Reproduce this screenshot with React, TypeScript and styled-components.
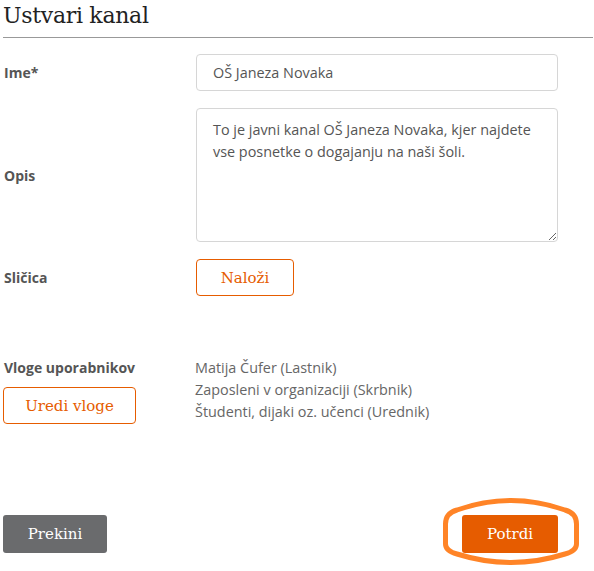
import React from "react";
import styled, { createGlobalStyle } from "styled-components";

const GlobalStyle = createGlobalStyle`
  html, body {
    margin: 0;
    background: #fff;
    font-family: "Source Sans Pro", "Open Sans", "Liberation Sans", sans-serif;
  }
`;

const roles = [
  "Matija Čufer (Lastnik)",
  "Zaposleni v organizaciji (Skrbnik)",
  "Študenti, dijaki oz. učenci (Urednik)",
];

const App = () => {
  return (
    <Page>
      <GlobalStyle />
      <Title>Ustvari kanal</Title>
      <Divider />
      <FormRow>
        <Label>Ime*</Label>
        <TextInput defaultValue="OŠ Janeza Novaka" />
      </FormRow>
      <FormRow>
        <Label>Opis</Label>
        <TextArea defaultValue="To je javni kanal OŠ Janeza Novaka, kjer najdete vse posnetke o dogajanju na naši šoli." />
      </FormRow>
      <FormRow>
        <Label>Sličica</Label>
        <OutlineButton $width={98}>Naloži</OutlineButton>
      </FormRow>
      <RolesRow>
        <RolesLabel>
          <Label>Vloge uporabnikov</Label>
          <OutlineButton $width={133}>Uredi vloge</OutlineButton>
        </RolesLabel>
        <RoleList>
          {roles.map((r) => (
            <li key={r}>{r}</li>
          ))}
        </RoleList>
      </RolesRow>
      <Footer>
        <SolidButton $color="#6a6b6d" $width={104}>Prekini</SolidButton>
        <Highlight>
          <SolidButton $color="#e65c00" $width={96}>Potrdi</SolidButton>
          <Ring viewBox="0 0 136 67">
            <path
              d="M14 12 Q68 -7 122 12 Q133.5 15 133.5 26 L133.5 46 Q133.5 53 122 56 Q68 73 14 56 Q2.5 53 2.5 46 L2.5 26 Q2.5 15 14 12 Z"
              fill="none"
              stroke="#ff8427"
              strokeWidth="5"
            />
          </Ring>
        </Highlight>
      </Footer>
    </Page>
  );
};

const Page = styled.div`
  width: 594px;
  min-height: 571px;
  padding: 0 0 0 3px;
  box-sizing: border-box;
`;

const Title = styled.h1`
  margin: 0;
  padding-top: 1px;
  font-family: "DejaVu Serif", "Liberation Serif", serif;
  font-weight: normal;
  font-size: 22px;
  line-height: 30px;
  color: #222;
  letter-spacing: -0.3px;
`;

const Divider = styled.hr`
  margin: 6px 0 16px;
  border: 0;
  border-top: 1px solid #999;
  width: 590px;
`;

const FormRow = styled.div`
  display: flex;
  align-items: center;
  margin-bottom: 17px;
`;

const Label = styled.label`
  width: 192px;
  padding-left: 1px;
  font-weight: bold;
  font-size: 14px;
  color: #555;
`;

const TextInput = styled.input`
  width: 362px;
  height: 37px;
  box-sizing: border-box;
  border: 1px solid #d6d6d6;
  border-radius: 4px;
  padding: 0 16px;
  font-family: inherit;
  font-size: 14.4px;
  color: #555;
  outline: none;
`;

const TextArea = styled.textarea`
  width: 362px;
  height: 134px;
  box-sizing: border-box;
  border: 1px solid #d6d6d6;
  border-radius: 4px;
  padding: 10px 16px;
  font-family: inherit;
  font-size: 14.4px;
  line-height: 22px;
  color: #555;
  outline: none;
  resize: vertical;
`;

const OutlineButton = styled.button<{ $width: number }>`
  width: ${(p) => p.$width}px;
  height: 37px;
  border: 1px solid #e65c00;
  border-radius: 4px;
  background: #fff;
  color: #e65c00;
  font-family: "DejaVu Serif", "Liberation Serif", serif;
  font-size: 15px;
  cursor: pointer;
`;

const RolesRow = styled.div`
  display: flex;
  margin-top: 61px;
`;

const RolesLabel = styled.div`
  width: 192px;
  display: flex;
  flex-direction: column;
  gap: 8px;
  align-items: flex-start;
  label {
    line-height: 22px;
  }
`;

const RoleList = styled.ul`
  list-style: none;
  margin: 0;
  padding: 0;
  font-size: 14.4px;
  line-height: 22px;
  color: #666;
`;

const Footer = styled.div`
  display: flex;
  justify-content: space-between;
  align-items: center;
  width: 555px;
  margin-top: 91px;
`;

const SolidButton = styled.button<{ $color: string; $width: number }>`
  display: block;
  width: ${(p) => p.$width}px;
  height: 38px;
  border: 0;
  border-radius: 3px;
  background: ${(p) => p.$color};
  color: #fff;
  font-family: "DejaVu Serif", "Liberation Serif", serif;
  font-size: 15px;
  cursor: pointer;
`;

const Highlight = styled.div`
  position: relative;
  display: flex;
`;

const Ring = styled.svg`
  position: absolute;
  display: block;
  left: -19px;
  top: -17px;
  width: 136px;
  height: 67px;
  overflow: visible;
  pointer-events: none;
`;

export default App;
